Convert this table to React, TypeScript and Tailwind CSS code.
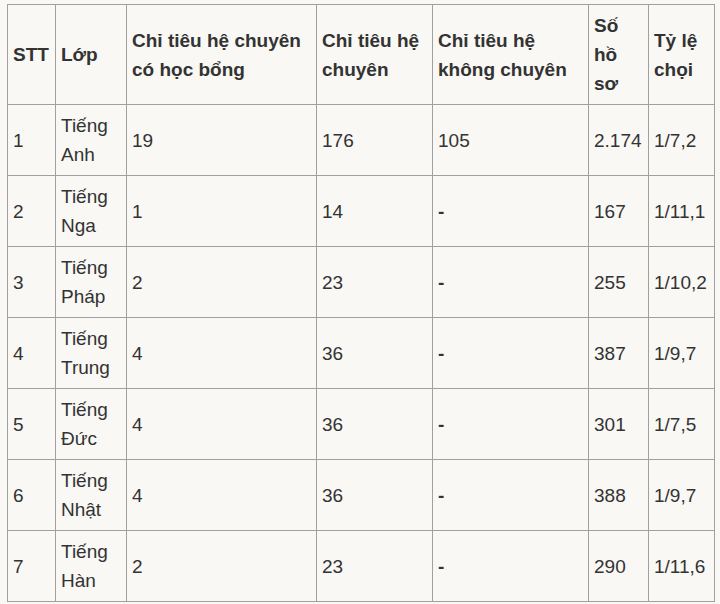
const headers = [
  'STT',
  'Lớp',
  'Chỉ tiêu hệ chuyên có học bổng',
  'Chỉ tiêu hệ chuyên',
  'Chỉ tiêu hệ không chuyên',
  'Số hồ sơ',
  'Tỷ lệ chọi',
]

const rows = [
  ['1', 'Tiếng Anh', '19', '176', '105', '2.174', '1/7,2'],
  ['2', 'Tiếng Nga', '1', '14', '-', '167', '1/11,1'],
  ['3', 'Tiếng Pháp', '2', '23', '-', '255', '1/10,2'],
  ['4', 'Tiếng Trung', '4', '36', '-', '387', '1/9,7'],
  ['5', 'Tiếng Đức', '4', '36', '-', '301', '1/7,5'],
  ['6', 'Tiếng Nhật', '4', '36', '-', '388', '1/9,7'],
  ['7', 'Tiếng Hàn', '2', '23', '-', '290', '1/11,6'],
]

const widths = ['w-[48px]', 'w-[71px]', 'w-[190px]', 'w-[116px]', 'w-[156px]', 'w-[60px]', 'w-[66px]']

export default function App() {
  return (
    <div className="min-h-[604px] w-[720px] bg-[#f9f8f4] pl-[7px] pt-[4px] font-['Liberation_Sans',Arial,sans-serif] text-[19px] leading-[29px] text-[#333]">
      <table className="w-[708px] table-fixed border-collapse border border-[#8f8f8f]">
        <colgroup>
          {widths.map((w, i) => (
            <col key={i} className={w} />
          ))}
        </colgroup>
        <thead>
          <tr>
            {headers.map((h) => (
              <th
                key={h}
                className="border border-[#a0a0a0] px-[5px] py-[6px] text-left align-middle font-bold"
              >
                {h}
              </th>
            ))}
          </tr>
        </thead>
        <tbody>
          {rows.map((r) => (
            <tr key={r[0]}>
              {r.map((c, i) => (
                <td
                  key={i}
                  className={`border border-[#a0a0a0] px-[5px] py-[6px] align-middle ${c === '-' ? 'font-bold' : ''}`}
                >
                  {c}
                </td>
              ))}
            </tr>
          ))}
        </tbody>
      </table>
    </div>
  )
}
